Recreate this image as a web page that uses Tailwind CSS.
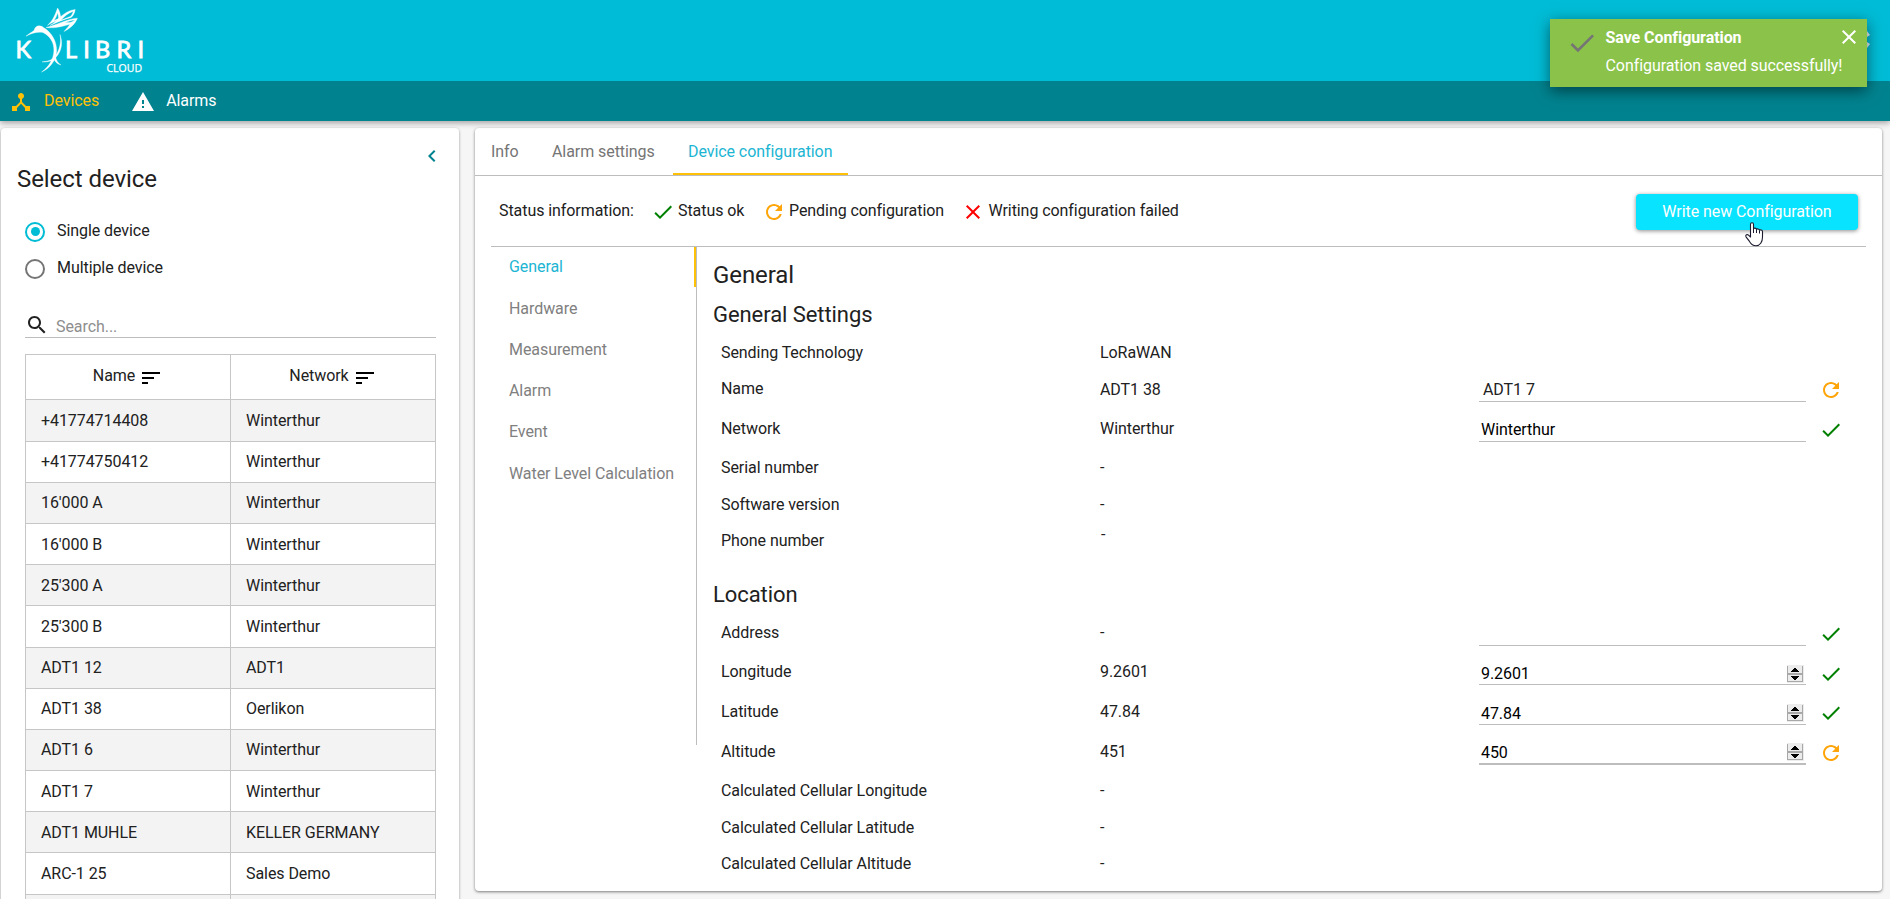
<!DOCTYPE html>
<html lang="en">
<head>
<meta charset="utf-8">
<title>Kolibri Cloud</title>
<script src="https://cdn.jsdelivr.net/npm/@tailwindcss/browser@4"></script>
</head>
<body class="h-[899px] w-[1890px] overflow-hidden bg-[#f6f6f6] font-[Roboto,sans-serif] text-base leading-6 tracking-[-0.07px] text-[#212121]">
<svg class="hidden">
  <symbol id="check" viewBox="0 0 24 24"><path d="M9 16.17L4.83 12l-1.42 1.41L9 19 21 7l-1.41-1.41z"/></symbol>
  <symbol id="refresh" viewBox="0 0 24 24"><path d="M17.65 6.35C16.2 4.9 14.21 4 12 4c-4.42 0-7.99 3.58-7.99 8s3.57 8 7.99 8c3.73 0 6.84-2.55 7.73-6h-2.08c-.82 2.33-3.04 4-5.65 4-3.31 0-6-2.69-6-6s2.69-6 6-6c1.66 0 3.14.69 4.22 1.78L13 11h7V4l-2.35 2.35z"/></symbol>
  <symbol id="close" viewBox="0 0 24 24"><path d="M19 6.41L17.59 5 12 10.59 6.41 5 5 6.41 10.59 12 5 17.59 6.41 19 12 13.41 17.59 19 19 17.59 13.41 12z"/></symbol>
  <symbol id="sort" viewBox="0 0 24 24"><path d="M3 18h6v-2H3v2zM3 6v2h18V6H3zm0 7h12v-2H3v2z"/></symbol>
  <symbol id="spin" viewBox="0 0 17 18"><path fill="#ececec" d="M0 0h17v18H0z"/><path fill="#a8a8a8" d="M0 1h1v16H0zM15 1h1v16h-1zM0 8h16v2H0zM0 16h16v1H0z"/><path fill="#000" d="M7 3h2v1h1v1h1v1h1v1H4V6h1V5h1V4h1zM4 11h8v1h-1v1h-1v1H9v1H7v-1H6v-1H5v-1H4z"/></symbol>
</svg>

<header class="relative z-10 shadow-[0_2px_6px_rgba(0,0,0,0.35)]">
  <div class="h-[81px] bg-[#00bcd6]">
    <svg class="block h-[81px] w-[160px] fill-white" viewBox="0 0 160 81">
      <text x="15.5 65 83.3 95 116.5 137.5" y="58" font-family="Lato, sans-serif" font-size="23.5" stroke="#fff" stroke-width="0.8">KLIBRI</text>
      <text x="106.5" y="71.5" font-family="Open Sans, sans-serif" font-size="11.4" letter-spacing="0" textLength="35.5" lengthAdjust="spacingAndGlyphs" stroke="#fff" stroke-width="0.25">CLOUD</text>
      <g stroke="#fff" stroke-width="0.35" stroke-linejoin="round">
      <path d="M26 36.200C29 33.600 31.500 32.500 34 30.500c.6-2.800 2.600-4.700 5.200-4.700 1.800 0 3.300.7 4.300 1.800C52 32.500 57 42 56.600 51c-.3 9-6.500 17.500-15 21 7-5 11.800-12.500 12.300-21C54.300 42.500 50 36 43 32.500c-5-1-11 .5-17 3.700z"/>
      <path fill-rule="evenodd" d="M47.500 25.300C53.500 20 55.500 13.500 57.600 8c2.400 3 2.900 8 3.500 11-4.500 1.500-9.500 4-13.600 6.300zM54 20.500c1.500-.8 3-1.400 4.600-2-.1-2.200-.4-4-.9-5.700-.8 2.900-2 5.500-3.700 7.700z"/>
      <path fill-rule="evenodd" d="M50 25.500C57 22 62.500 11 75.200 9.400c-.6 4-1.800 6-4 8-6 1.500-14.500 5-21.200 8.100zM61 20c3.500-1.300 6.500-2.400 9.300-3.500 1.500-1.500 2.300-3 3-5.300C68 13 64.500 16.500 61 20z"/>
      <path fill-rule="evenodd" d="M46 27.500c10-2 20-8.500 31.400-9.300-2.200 5.500-6.500 9.800-13.400 13.300 2.500-3 4.500-5 5.800-7.300-7 2.300-16 4.500-23.800 3.300zM70 22.500c2-.5 3.500-1.200 5-2.500-3 .3-7 1.300-10 2.500z"/>
      <path d="M60 34.500c3 8 2 16.500-4.200 23C54 60.500 48 62.500 42 61.800c6-.3 10-1.800 12.500-4.800C59.500 50.500 61.500 43 60 34.500zM55.500 57c1 3.500 2.500 6.500 5.500 8-4-.8-6.500-3.500-7.300-7z"/>
      </g>
    </svg>
  </div>
  <nav class="flex h-10 items-center bg-[#00838f] pl-[9px] text-white">
    <a class="flex items-center text-[#ffc107]"><svg class="mt-px mr-[11px] size-6 fill-current" viewBox="0 0 24 24"><path d="M17 16l-4-4V8.820C14.160 8.400 15 7.300 15 6c0-1.660-1.340-3-3-3S9 4.340 9 6c0 1.300.84 2.400 2 2.820V12l-4 4H3v5h5v-3.050l4-4.200 4 4.200V21h5v-5h-4z"/></svg>Devices</a>
    <a class="ml-8 flex items-center"><svg class="mt-px mr-[11px] size-6 fill-current" viewBox="0 0 24 24"><path d="M1 21h22L12 2 1 21zm12-3h-2v-2h2v2zm0-4h-2v-4h2v4z"/></svg>Alarms</a>
  </nav>
</header>

<main class="flex items-start gap-4 pt-[7px] pl-px">
  <section class="flex h-[800px] w-[458px] flex-col rounded bg-white px-6 shadow-[0_1px_3px_rgba(0,0,0,0.4)]">
    <svg class="mt-4 -mr-[9px] size-6 shrink-0 self-end fill-[#00838f]" viewBox="0 0 24 24"><path d="M15.410 7.410L14 6l-6 6 6 6 1.410-1.410L10.830 12z"/></svg>
    <h1 class="-mt-[5px] -ml-2 h-8 text-2xl leading-8">Select device</h1>
    <label class="mt-[24px] flex h-6 items-center"><span class="mt-px flex size-5 items-center justify-center rounded-full border-2 border-[#00bcd4]"><span class="size-[9px] rounded-full bg-[#00bcd4]"></span></span><span class="ml-3">Single device</span></label>
    <label class="mt-[13px] flex h-6 items-center"><span class="mt-px size-5 rounded-full border-2 border-[#757575]"></span><span class="ml-3">Multiple device</span></label>
    <div class="mt-[33px] flex h-[25px] w-[411px] border-b border-[#bdbdbd]"><svg class="size-6 fill-[#212121]" viewBox="0 0 24 24"><path d="M15.500 14h-.79l-.28-.27C15.410 12.590 16 11.110 16 9.500 16 5.910 13.090 3 9.500 3S3 5.910 3 9.500 5.910 16 9.500 16c1.610 0 3.090-.59 4.230-1.570l.27.28v.79l5 4.990L20.490 19l-4.990-5zm-6 0C7.010 14 5 11.990 5 9.500S7.010 5 9.500 5 14 7.010 14 9.500 11.990 14 9.500 14z"/></svg><span class="mt-[2px] ml-[7px] text-[#8e8e8e]">Search...</span></div>
    <div id="devices" class="mt-4 w-[411px] border-x border-t border-[#c6c6c6]">
      <div class="flex h-[44.400px]">
        <div class="flex w-[205px] items-center justify-center gap-1 border-r border-[#c6c6c6] pb-[3px]">Name<svg class="mt-1 size-6"><use href="#sort"/></svg></div>
        <div class="flex flex-1 items-center justify-center gap-1 pb-[3px]">Network<svg class="mt-1 size-6"><use href="#sort"/></svg></div>
      </div>
    </div>
  </section>

  <section class="h-[763px] w-[1407px] rounded bg-white shadow-[0_1px_3px_rgba(0,0,0,0.5)]">
    <div class="flex h-12 border-b border-[#bdbdbd] text-[#757575]">
      <a class="w-[61px] pt-3 pl-4">Info</a><a class="w-[137px] pt-3 pl-4">Alarm settings</a><a class="w-[175px] border-b-2 border-[#ffc107] pt-3 pl-[15px] text-[#1cb5d3]">Device configuration</a>
    </div>
    <div class="mx-4 flex h-[71px] w-[1375px] items-start border-b border-[#bdbdbd] pt-[18px] pl-2">
      <span class="mt-[5px] w-[152px]">Status information:</span>
      <svg class="mt-[6px] size-6 fill-[#008000]"><use href="#check"/></svg><span class="mt-[5px] ml-[3px] w-[84px]">Status ok</span>
      <svg class="mt-[6px] size-6 fill-[#ffa50a]"><use href="#refresh"/></svg><span class="mt-[5px] ml-[3px] w-[172px]">Pending configuration</span>
      <svg class="mt-[6px] size-6 fill-[#ff0000]"><use href="#close"/></svg><span class="mt-[5px] ml-[3.500px]">Writing configuration failed</span>
      <button class="relative mr-2 ml-auto h-9 w-[222px] rounded bg-[#08e3ff] text-white shadow-[0_1px_4px_rgba(0,0,0,0.45)]">Write new Configuration
        <svg class="absolute top-7 left-[109px] h-[25px] w-[19px]" viewBox="0 0 19 25"><path fill="#fff" stroke="#1a1a2e" stroke-width="1.100" stroke-linejoin="round" d="M5.500 13V2.200c0-2 3-2 3 0v4.600c.5-1 2.700-.9 3 .6.7-.8 2.600-.6 2.900.8.900-.7 3.100-.3 3.100 1.500V15c0 5-2.500 8.800-6.500 8.800-3.500 0-5-1.800-6.700-4.600L1 14.800c-.8-2 1.200-2.800 2.500-1.700l2 1.900z"/><path fill="none" stroke="#1a1a2e" d="M8.500 6.500V11M11.500 7.500V11M14.500 8.500V11.500"/></svg>
      </button>
    </div>
    <div class="flex pl-4">
      <aside class="relative h-[498px] w-[206px] border-r border-[#bdbdbd] text-[#808080]">
        <div class="flex flex-col pt-[8.250px] pl-[18px]">
          <a class="h-[41.300px] text-[#1cb5d3]">General</a><a class="h-[41.300px]">Hardware</a><a class="h-[41.300px]">Measurement</a><a class="h-[41.300px]">Alarm</a><a class="h-[41.300px]">Event</a><a class="h-[41.300px]">Water Level Calculation</a>
        </div>
        <span class="absolute top-0 right-0 h-10 w-0.5 bg-[#ffc107]"></span>
      </aside>
      <div id="settings" class="w-[1153px] pl-4">
        <h2 class="mt-[12px] h-8 text-2xl leading-8">General</h2>
        <h3 class="mt-2 h-8 text-[22px] leading-8">General Settings</h3>
        <div class="grid grid-cols-[379px_379px_340px_24px] pt-[10px] pl-2">
          <span class="h-9">Sending Technology</span><span>LoRaWAN</span><i></i><i></i>
          <span class="h-10">Name</span><span class="mt-px">ADT1 38</span><span class="h-[25px] w-[327px] border-b border-[#bdbdbd] pt-px pl-1">ADT1 7</span><svg class="mt-px size-6 fill-[#ffa50a]"><use href="#refresh"/></svg>
          <span class="h-[39px]">Network</span><span>Winterthur</span><span class="h-[25px] w-[327px] border-b border-[#bdbdbd] pt-px pl-0.5 text-black">Winterthur</span><svg class="mt-px size-6 fill-[#008000]"><use href="#check"/></svg>
          <span class="h-[37px]">Serial number</span><span>-</span><i></i><i></i>
          <span class="h-9">Software version</span><span>-</span><i></i><i></i>
          <span class="h-9">Phone number</span><span class="-mt-1.5 pl-px">-</span><i></i><i></i>
        </div>
        <h3 class="mt-[14px] h-8 text-[22px] leading-8">Location</h3>
        <div class="grid grid-cols-[379px_379px_340px_24px] pt-[10px] pl-2">
          <span class="h-[39px]">Address</span><span>-</span><span class="h-[25px] w-[327px] border-b border-[#bdbdbd]"></span><svg class="mt-px size-6 fill-[#008000]"><use href="#check"/></svg>
          <span class="h-10">Longitude</span><span>9.2601</span><span class="flex h-[25px] w-[327px] justify-between border-b border-[#bdbdbd] pt-[2px] pr-[2px] pl-0.5 text-black">9.2601<svg class="mt-[3px] h-[18px] w-[17px]"><use href="#spin"/></svg></span><svg class="mt-[2px] size-6 fill-[#008000]"><use href="#check"/></svg>
          <span class="h-10">Latitude</span><span>47.84</span><span class="flex h-[25px] w-[327px] justify-between border-b border-[#bdbdbd] pt-[2px] pr-[2px] pl-0.5 text-black">47.84<svg class="mt-[2px] h-[18px] w-[17px]"><use href="#spin"/></svg></span><svg class="mt-px size-6 fill-[#008000]"><use href="#check"/></svg>
          <span class="h-[39px]">Altitude</span><span>451</span><span class="flex h-[25px] w-[327px] justify-between border-b-2 border-[#bdbdbd] pt-px pr-[2px] pl-0.5 text-black">450<svg class="mt-[2px] h-[18px] w-[17px]"><use href="#spin"/></svg></span><svg class="mt-px size-6 fill-[#ffa50a]"><use href="#refresh"/></svg>
          <span class="h-[37px]">Calculated Cellular Longitude</span><span>-</span><i></i><i></i>
          <span class="h-9">Calculated Cellular Latitude</span><span>-</span><i></i><i></i>
          <span>Calculated Cellular Altitude</span><span>-</span><i></i><i></i>
        </div>
      </div>
    </div>
  </section>
</main>

<svg class="absolute top-[30px] left-[1862px] z-20 h-5 w-2 fill-[#e0f2f4]" viewBox="0 0 8 20"><path d="M5 1l3 4-3 2zM5 12l3 2-3 4z"/></svg>
<div class="absolute top-[19px] left-[1550px] z-30 flex h-[68px] w-[317px] bg-[#8bc34a] text-white shadow-[0_4px_14px_rgba(0,0,0,0.5)]">
  <svg class="mt-2 ml-4 size-8 fill-[#757575]"><use href="#check"/></svg>
  <div class="ml-[7.500px] flex flex-col gap-1 pt-[7px]"><span class="font-bold">Save Configuration</span><span>Configuration saved successfully!</span></div>
  <svg class="absolute top-1.5 right-1.5 size-6 fill-white"><use href="#close"/></svg>
</div>

<script>
const devices = [["+41774714408","Winterthur"],["+41774750412","Winterthur"],["16'000 A","Winterthur"],["16'000 B","Winterthur"],["25'300 A","Winterthur"],["25'300 B","Winterthur"],["ADT1 12","ADT1"],["ADT1 38","Oerlikon"],["ADT1 6","Winterthur"],["ADT1 7","Winterthur"],["ADT1 MUHLE","KELLER GERMANY"],["ARC-1 25","Sales Demo"],["",""]];
document.getElementById("devices").insertAdjacentHTML("beforeend", devices.map(([name, network]) => `
  <div class="flex h-[41.200px] border-t border-[#c6c6c6] odd:bg-white even:bg-[#f3f3f3]">
    <div class="flex w-[205px] items-center border-r border-[#c6c6c6] pt-px pl-[15px]">${name}</div>
    <div class="flex flex-1 items-center pt-px pl-[15px]">${network}</div>
  </div>`).join(""));
</script>
</body>
</html>
